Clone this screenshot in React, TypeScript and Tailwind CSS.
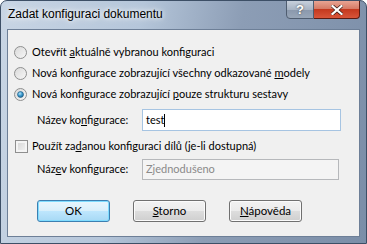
const TITLE_FONT = { fontFamily: '"Liberation Sans", Arial, sans-serif' };
const BODY_FONT = { fontFamily: 'Lato, "Liberation Sans", sans-serif' };

function Radio({ checked }: { checked?: boolean }) {
    return (
        <svg width="13" height="13" viewBox="0 0 13 13" className="shrink-0">
            <defs>
                <linearGradient id="rb" x1="0" y1="0" x2="1" y2="1">
                    <stop offset="0" stopColor="#d8d8d8" />
                    <stop offset="1" stopColor="#f8f8f8" />
                </linearGradient>
                <radialGradient id="rd" cx="0.4" cy="0.35" r="0.7">
                    <stop offset="0" stopColor="#b8e4f8" />
                    <stop offset="0.5" stopColor="#3e9cd0" />
                    <stop offset="1" stopColor="#175f8e" />
                </radialGradient>
            </defs>
            <circle cx="6.5" cy="6.5" r="6" fill="url(#rb)" stroke="#8e8f8f" strokeWidth="1" />
            {checked && <circle cx="6.5" cy="6.5" r="3" fill="url(#rd)" stroke="#1c5980" strokeWidth="0.6" />}
        </svg>
    );
}

function Button({ children, primary }: { children: React.ReactNode; primary?: boolean }) {
    return (
        <div
            className={
                "w-[73px] h-[22px] rounded-[3px] flex items-center justify-center text-[11.5px] text-black " +
                (primary
                    ? "border border-[#3c7fb1] shadow-[inset_0_0_0_1px_#7fdcff] bg-[linear-gradient(#e8f6fd_0%,#d8effb_50%,#bee6fd_51%,#a7d9f5_100%)]"
                    : "border border-[#707070] shadow-[inset_0_0_0_1px_#fbfbfb] bg-[linear-gradient(#f2f2f2_0%,#ebebeb_50%,#dddddd_51%,#cfcfcf_100%)]")
            }
        >
            {children}
        </div>
    );
}

export default function App() {
    return (
        <div
            className="w-[367px] h-[244px] relative rounded-t-[7px] border border-[#3d4f66] overflow-hidden bg-[linear-gradient(100deg,#c8d5e4_0%,#b5c6da_35%,#8c9db5_60%,#7b8ea8_100%)]"
            style={TITLE_FONT}
        >
            {/* title bar */}
            <div className="h-[28px] flex items-start justify-between">
                <div className="pl-[7px] pt-[7px] text-[12px] leading-none text-black [text-shadow:0_0_8px_#ffffff,0_0_4px_#ffffff]">
                    Zadat konfiguraci dokumentu
                </div>
                <div className="flex mr-[6px] -mt-px">
                    <div className="w-[28px] h-[19px] rounded-bl-[4px] border border-[#4f5d70] flex items-center justify-center text-white font-bold text-[13px] bg-[linear-gradient(#c7d0dc_0%,#a8b4c4_50%,#8a98ac_51%,#98a6b8_100%)] [text-shadow:0_0_2px_#333]">
                        ?
                    </div>
                    <div className="w-[46px] h-[19px] rounded-br-[4px] border border-l-0 border-[#5a1c14] flex items-center justify-center bg-[linear-gradient(#e8a493_0%,#d57b66_45%,#c4391f_50%,#d8553a_100%)]">
                        <svg width="12" height="10" viewBox="0 0 12 10">
                            <path d="M1.5 1 L10.5 9 M10.5 1 L1.5 9" stroke="#3a1a14" strokeWidth="3.6" strokeLinecap="square" />
                            <path d="M1.5 1 L10.5 9 M10.5 1 L1.5 9" stroke="#ffffff" strokeWidth="2.2" strokeLinecap="square" />
                        </svg>
                    </div>
                </div>
            </div>

            {/* client area */}
            <div className="mx-[6px] h-[208px] border border-[#6d7f97] bg-[#f0f0f0] text-[11px] text-black" style={BODY_FONT}>
                <div className="pt-[12px] pl-[6px] flex flex-col">
                    <div className="h-[21px] flex items-center gap-[5px]">
                        <Radio />
                        <span>Otevřít <u>a</u>ktuálně vybranou konfiguraci</span>
                    </div>
                    <div className="h-[21px] flex items-center gap-[5px]">
                        <Radio />
                        <span>Nová konfigurace zobrazující všechny odkazované <u>m</u>odely</span>
                    </div>
                    <div className="h-[21px] flex items-center gap-[5px]">
                        <Radio checked />
                        <span>Nová konfigurace zobrazující <u>p</u>ouze strukturu sestavy</span>
                    </div>

                    <div className="mt-[4px] h-[22px] flex items-center">
                        <span className="w-[128px] shrink-0 pl-[23px]">Název ko<u>n</u>figurace:</span>
                        <div className="w-[199px] h-[22px] border border-[#a6c4e2] bg-white flex items-center pl-[3px]">
                            test<span className="w-px h-[13px] bg-black" />
                        </div>
                    </div>

                    <div className="mt-[7px] h-[16px] flex items-center gap-[4px] pl-[1px]">
                        <div className="w-[13px] h-[13px] border border-[#8f8f8f] bg-[linear-gradient(135deg,#d3d3d3,#f5f5f5)] shadow-[inset_0_0_0_2px_#f4f4f4]" />
                        <span>Použít za<u>d</u>anou konfiguraci dílů (je-li dostupná)</span>
                    </div>

                    <div className="mt-[5px] h-[21px] flex items-center">
                        <span className="w-[128px] shrink-0 pl-[23px]">Náz<u>e</u>v konfigurace:</span>
                        <div className="w-[197px] h-[21px] border border-[#b6b8bb] bg-[#f4f4f4] flex items-center pl-[3px] text-[#8a8a8a]">
                            Zjednodušeno
                        </div>
                    </div>

                    <div className="mt-[20px] flex gap-[23px] pl-[23px]">
                        <Button primary>OK</Button>
                        <Button>
                            <span><u>S</u>torno</span>
                        </Button>
                        <Button>
                            <span><u>N</u>ápověda</span>
                        </Button>
                    </div>
                </div>
            </div>
        </div>
    );
}
